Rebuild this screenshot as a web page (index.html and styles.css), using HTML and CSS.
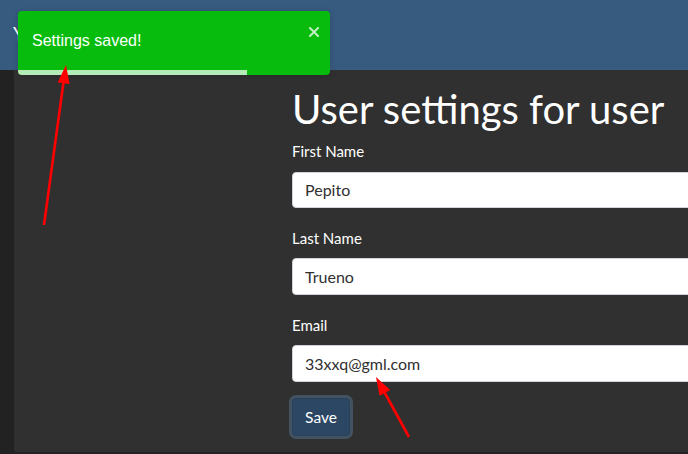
FILE: index.html
```html
<!DOCTYPE html>
<html lang="en">
<head>
<meta charset="utf-8">
<title>User settings</title>
<link rel="stylesheet" href="styles.css">
</head>
<body>
<div class="app">
  <header class="navbar">
    <span class="brand">Your App</span>
  </header>
  <div class="layout">
    <aside class="rail"></aside>
    <main class="panel">
      <h1 class="title">User settings for user</h1>
      <form class="form">
        <div class="group">
          <label class="label">First Name</label>
          <input class="input" type="text" value="Pepito">
        </div>
        <div class="group">
          <label class="label">Last Name</label>
          <input class="input" type="text" value="Trueno">
        </div>
        <div class="group">
          <label class="label">Email</label>
          <input class="input" type="text" value="33xxq@gml.com">
        </div>
        <button class="btn" type="button">Save</button>
      </form>
    </main>
  </div>
</div>

<div class="toast">
  <div class="toast-body">Settings saved!</div>
  <button class="toast-close" type="button" aria-label="close">
    <svg width="10" height="10" viewBox="0 0 10 10"><path d="M1 1L9 9M9 1L1 9" stroke="currentColor" stroke-width="2" stroke-linecap="square"/></svg>
  </button>
  <div class="toast-progress" style="width:73.3%"></div>
</div>

<svg class="annotations" width="688" height="454" viewBox="0 0 688 454">
  <line x1="44" y1="225" x2="63.8" y2="80" stroke="#ff0000" stroke-width="2.6"/>
  <polygon points="66,65 69.6,84 57.6,82.4" fill="#ff0000"/>
  <line x1="409" y1="437" x2="383.5" y2="390.5" stroke="#ff0000" stroke-width="2.6"/>
  <polygon points="376,377 390.2,389.9 379.6,395.8" fill="#ff0000"/>
</svg>
</body>
</html>
```

FILE: styles.css
```css
* { box-sizing: border-box; }

html, body {
  margin: 0;
  padding: 0;
  width: 688px;
  height: 454px;
  overflow: hidden;
  background: #222222;
  font-family: Lato, "Liberation Sans", sans-serif;
}

.app {
  display: flex;
  flex-direction: column;
  height: 454px;
}

.navbar {
  height: 70px;
  flex: none;
  background: #375a7f;
  display: flex;
  align-items: center;
  padding-left: 13px;
}

.brand {
  color: #ffffff;
  font-size: 19px;
  line-height: 1;
  margin-top: -3px;
}

.layout {
  display: flex;
  height: 382px;
  flex: none;
}

.rail {
  width: 14px;
  flex: none;
  background: #222222;
  position: relative;
  z-index: 1;
}

.panel {
  flex: 1;
  background: #303030;
  border-bottom-left-radius: 3px;
  padding: 14.5px 0 0 278px;
}

.title {
  margin: 0 0 7.5px 0;
  font-size: 40px;
  font-weight: 400;
  line-height: 48px;
  color: #ffffff;
  white-space: nowrap;
}

.form {
  display: flex;
  flex-direction: column;
  align-items: flex-start;
}

.group {
  display: flex;
  flex-direction: column;
  width: 420px;
  margin-bottom: 18.6px;
}

.group:last-of-type { margin-bottom: 16.5px; }

.label {
  font-size: 15px;
  line-height: 22.5px;
  color: #ffffff;
  margin-bottom: 9.2px;
}

.input {
  height: 36.5px;
  width: 100%;
  border: 1px solid #ced4da;
  border-radius: 4px;
  background: #ffffff;
  padding: 0 12px;
  font-family: Lato, "Liberation Sans", sans-serif;
  font-size: 16px;
  color: #303030;
  outline: none;
}

.btn {
  height: 38px;
  width: 58px;
  padding: 0;
  background: #2b4764;
  border: 1px solid #28415b;
  border-radius: 4px;
  box-shadow: 0 0 0 3px rgba(85, 115, 146, 0.5);
  color: #ffffff;
  font-family: Lato, "Liberation Sans", sans-serif;
  font-size: 15.5px;
  line-height: 1;
}

/* toast */
.toast {
  position: absolute;
  left: 18px;
  top: 11px;
  width: 312px;
  height: 64px;
  background: #07bc0c;
  border-radius: 4px;
  box-shadow: 0 1px 6px rgba(0, 0, 0, 0.15);
  overflow: hidden;
  display: flex;
  align-items: center;
  padding: 0 0 4px 14px;
}

.toast-body {
  font-family: "Liberation Sans", Arial, sans-serif;
  font-size: 16px;
  color: #ffffff;
}

.toast-close {
  position: absolute;
  right: 11px;
  top: 16px;
  width: 10px;
  height: 10px;
  padding: 0;
  border: 0;
  background: transparent;
  color: rgba(255, 255, 255, 0.75);
  display: block;
}

.toast-close svg { display: block; }

.toast-progress {
  position: absolute;
  left: 0;
  bottom: 0;
  height: 5px;
  background: rgba(255, 255, 255, 0.7);
}

.annotations {
  position: absolute;
  left: 0;
  top: 0;
  pointer-events: none;
}
```
